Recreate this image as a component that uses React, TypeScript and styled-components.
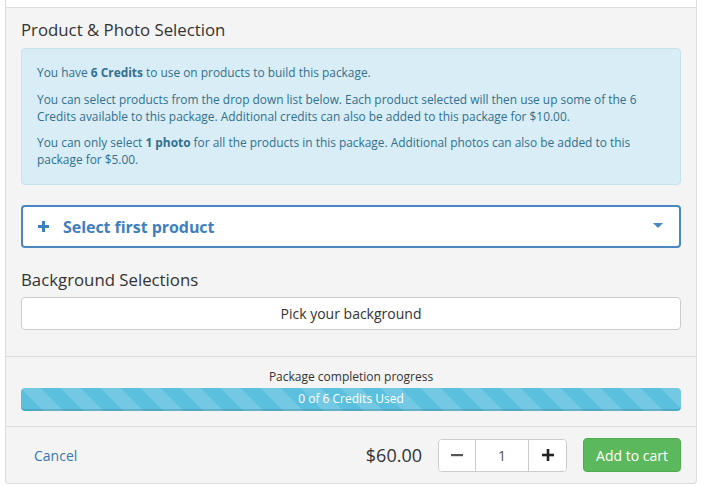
import React from "react";
import styled, { createGlobalStyle } from "styled-components";

const GlobalStyle = createGlobalStyle`
  html, body { margin: 0; padding: 0; background: #ffffff; }
  body { font-family: "Open Sans", "Liberation Sans", sans-serif; color: #333333; }
  * { box-sizing: border-box; }
`;

const Frame = styled.div`
  margin-left: 5px;
  width: 692px;
  height: 484px;
  border: 1px solid #dddddd;
  border-top: none;
  border-radius: 0 0 4px 4px;
  background: #f4f4f4;
  display: flex;
  flex-direction: column;
  overflow: hidden;
`;

const TopStrip = styled.div`
  height: 8px;
  background: #ffffff;
  border-bottom: 1px solid #dddddd;
  flex: none;
`;

const Body = styled.div`
  padding: 12px 15px 26px 15px;
  display: flex;
  flex-direction: column;
`;

const SectionTitle = styled.h3<{ $mt?: number }>`
  margin: ${(p) => p.$mt ?? 0}px 0 ${(p) => (p.$mt ? 8 : 9)}px 0;
  font-size: 16.8px;
  font-weight: 400;
  line-height: 19px;
  color: #333333;
`;

const Alert = styled.div`
  background: #d9edf7;
  border: 1px solid #c5e3ee;
  border-radius: 4px;
  color: #31708f;
  padding: 15px 15px 15px 15px;
  font-size: 11.9px;
  line-height: 17px;
  height: 137px;
`;

const AlertP = styled.p`
  margin: 0 0 9.5px 0;
  &:last-child { margin-bottom: 0; }
`;

const Strong = styled.strong`
  font-weight: 700;
`;

const ProductSelect = styled.div`
  margin-top: 20px;
  height: 43px;
  background: #ffffff;
  border: 2px solid #4a86bf;
  border-radius: 4px;
  display: flex;
  align-items: center;
  padding: 0 16px 0 15px;
  color: #3f7fbf;
  font-weight: 700;
  font-size: 16px;
`;

const SelectLabel = styled.span`
  flex: 1;
  margin-left: 14px;
  letter-spacing: -0.05px;
`;

const Caret = styled.span`
  width: 0;
  height: 0;
  border-left: 5px solid transparent;
  border-right: 5px solid transparent;
  border-top: 5px solid #4a86bf;
  margin-top: -2px;
`;

const WideButton = styled.button`
  height: 33px;
  width: 100%;
  background: #ffffff;
  border: 1px solid #cccccc;
  border-radius: 4px;
  font-family: "Open Sans", "Liberation Sans", sans-serif;
  font-size: 14px;
  color: #333333;
  padding: 0;
  cursor: pointer;
`;

const ProgressSection = styled.div`
  border-top: 1px solid #dddddd;
  padding: 11px 15px 15px 15px;
  display: flex;
  flex-direction: column;
  align-items: stretch;
`;

const ProgressLabel = styled.div`
  text-align: center;
  font-size: 12px;
  line-height: 17px;
  color: #333333;
  margin-bottom: 3px;
`;

const ProgressTrack = styled.div`
  height: 23px;
  border-radius: 4px;
  background-color: #5bc0de;
  background-image: linear-gradient(
    45deg,
    rgba(255, 255, 255, 0.15) 25%,
    transparent 25%,
    transparent 50%,
    rgba(255, 255, 255, 0.15) 50%,
    rgba(255, 255, 255, 0.15) 75%,
    transparent 75%,
    transparent
  );
  background-size: 40px 40px;
  box-shadow: inset 0 -2px 0 rgba(0, 0, 0, 0.12);
  color: #ffffff;
  font-size: 12px;
  line-height: 22px;
  text-align: center;
`;

const Footer = styled.div`
  border-top: 1px solid #dddddd;
  flex: 1;
  display: flex;
  align-items: center;
  padding: 0 15px 0 28px;
`;

const CancelLink = styled.a`
  color: #3a77ad;
  font-size: 14px;
  text-decoration: none;
  flex: 1;
`;

const Price = styled.span`
  font-size: 18px;
  color: #333333;
  margin-right: 16px;
`;

const QtyGroup = styled.div`
  display: flex;
  height: 33px;
  border: 1px solid #cccccc;
  border-radius: 4px;
  background: #ffffff;
  overflow: hidden;
  margin-right: 16px;
`;

const QtyButton = styled.button<{ $w: number }>`
  width: ${(p) => p.$w}px;
  border: none;
  background: #ffffff;
  display: flex;
  align-items: center;
  justify-content: center;
  padding: 0;
  cursor: pointer;
`;

const QtyInput = styled.div`
  width: 54px;
  border-left: 1px solid #cccccc;
  border-right: 1px solid #cccccc;
  display: flex;
  align-items: center;
  justify-content: center;
  font-size: 14px;
  color: #555555;
`;

const AddButton = styled.button`
  height: 34px;
  width: 98px;
  background: #5cb85c;
  border: 1px solid #4cae4c;
  border-radius: 4px;
  color: #ffffff;
  font-family: "Open Sans", "Liberation Sans", sans-serif;
  font-size: 14px;
  padding: 0;
  cursor: pointer;
`;

const PlusIcon = ({ color, size, stroke }: { color: string; size: number; stroke: number }) => (
  <svg width={size} height={size} viewBox={`0 0 ${size} ${size}`}>
    <rect x={(size - stroke) / 2} y={0} width={stroke} height={size} fill={color} />
    <rect x={0} y={(size - stroke) / 2} width={size} height={stroke} fill={color} />
  </svg>
);

const MinusIcon = () => (
  <svg width="12" height="12" viewBox="0 0 12 12">
    <rect x="0" y="5" width="12" height="2.2" fill="#555555" />
  </svg>
);

export default function App() {
  return (
    <>
      <GlobalStyle />
      <Frame>
        <TopStrip />
        <Body>
          <SectionTitle>Product &amp; Photo Selection</SectionTitle>
          <Alert>
            <AlertP>
              You have <Strong>6 Credits</Strong> to use on products to build this package.
            </AlertP>
            <AlertP>
              You can select products from the drop down list below. Each product selected will then use up some of the 6
              Credits available to this package. Additional credits can also be added to this package for $10.00.
            </AlertP>
            <AlertP>
              You can only select <Strong>1 photo</Strong> for all the products in this package. Additional photos can also be added to this
              package for $5.00.
            </AlertP>
          </Alert>
          <ProductSelect>
            <PlusIcon color="#3f7fbf" size={11} stroke={3} />
            <SelectLabel>Select first product</SelectLabel>
            <Caret />
          </ProductSelect>
          <SectionTitle $mt={22}>Background Selections</SectionTitle>
          <WideButton>Pick your background</WideButton>
        </Body>
        <ProgressSection>
          <ProgressLabel>Package completion progress</ProgressLabel>
          <ProgressTrack>0 of 6 Credits Used</ProgressTrack>
        </ProgressSection>
        <Footer>
          <CancelLink href="#">Cancel</CancelLink>
          <Price>$60.00</Price>
          <QtyGroup>
            <QtyButton $w={36}>
              <MinusIcon />
            </QtyButton>
            <QtyInput>1</QtyInput>
            <QtyButton $w={37}>
              <PlusIcon color="#222222" size={12} stroke={2.6} />
            </QtyButton>
          </QtyGroup>
          <AddButton>Add to cart</AddButton>
        </Footer>
      </Frame>
    </>
  );
}
